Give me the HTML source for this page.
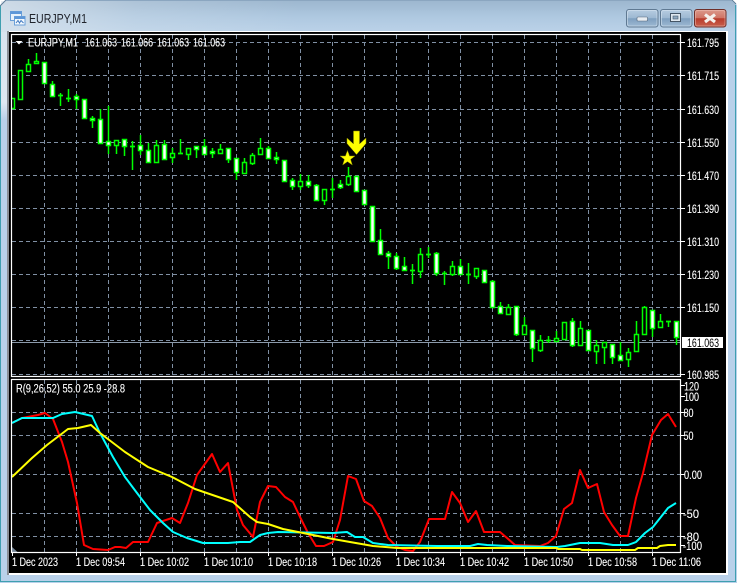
<!DOCTYPE html>
<html><head><meta charset="utf-8"><title>EURJPY,M1</title>
<style>html,body{margin:0;padding:0;width:738px;height:583px;overflow:hidden;background:#fff}svg{display:block}text{font-family:"Liberation Sans",sans-serif}</style>
</head><body>
<svg width="738" height="583" viewBox="0 0 738 583" xmlns="http://www.w3.org/2000/svg">
<defs>
<linearGradient id="tb" x1="0" y1="0" x2="0" y2="1"><stop offset="0" stop-color="#9db7cf"/><stop offset=".5" stop-color="#aec8e0"/><stop offset="1" stop-color="#bbd2e8"/></linearGradient>
<linearGradient id="tl" x1="0" y1="0" x2="1" y2="0"><stop offset="0" stop-color="#dde6ee" stop-opacity=".75"/><stop offset=".45" stop-color="#dde6ee" stop-opacity=".25"/><stop offset="1" stop-color="#dde6ee" stop-opacity="0"/></linearGradient>
<linearGradient id="lf" x1="0" y1="0" x2="0" y2="1"><stop offset="0" stop-color="#d8e4ef"/><stop offset=".8" stop-color="#dfe9f3"/><stop offset="1" stop-color="#b9d1ea"/></linearGradient>
<linearGradient id="bb" x1="0" y1="0" x2="0" y2="1"><stop offset="0" stop-color="#b7cde2"/><stop offset=".48" stop-color="#9db8d2"/><stop offset=".52" stop-color="#7e9fbf"/><stop offset="1" stop-color="#9fbad4"/></linearGradient>
<linearGradient id="bc" x1="0" y1="0" x2="0" y2="1"><stop offset="0" stop-color="#dc9a8c"/><stop offset=".48" stop-color="#cf7465"/><stop offset=".52" stop-color="#b83b2b"/><stop offset="1" stop-color="#c9624f"/></linearGradient>
<clipPath id="cm"><rect x="12" y="35" width="668" height="341"/></clipPath>
<clipPath id="cs"><rect x="12" y="380" width="668" height="172"/></clipPath>
</defs>
<rect width="738" height="583" fill="#fff"/>
<path d="M0 6L6 0H732L737 5V583H0Z" fill="#b9d1ea"/>
<path d="M1 5L5 1H732L736 5V32H1Z" fill="url(#tb)"/>
<rect x="1" y="1" width="300" height="31" fill="url(#tl)"/>
<rect x="1" y="32" width="6" height="88" fill="url(#lf)"/>
<path d="M0 6L6 0H732L736 4" fill="none" stroke="#5d7b96" stroke-width="1"/>
<path d="M.5 6V581.5H735.5V5" fill="none" stroke="#3f9fb0" stroke-width="1"/>
<rect x="7" y="31" width="721" height="544" fill="#fff"/>
<rect x="7" y="31" width="2" height="544" fill="#8a8f96"/>
<rect x="9" y="32" width="717" height="541" fill="#000"/>

<!-- title -->
<g>
<rect x="10.5" y="11.5" width="11" height="9" fill="#e8f2fb" stroke="#6a9fd8"/>
<rect x="10.5" y="11.5" width="11" height="2.5" fill="#5d97d8"/>
<rect x="14.5" y="16.5" width="10.5" height="8.5" fill="#f4f9fd" stroke="#6a9fd8"/>
<rect x="14.5" y="16.5" width="10.5" height="2.5" fill="#5d97d8"/>
<path d="M16 23L18 20.5L19.5 23L21 20.5L23.5 23" fill="none" stroke="#3f78c0" stroke-width="1"/>
</g>
<text x="29" y="23" font-size="13" fill="#20242c" textLength="58" lengthAdjust="spacingAndGlyphs">EURJPY,M1</text>

<!-- buttons -->
<rect x="626.5" y="9.5" width="31.5" height="17.5" rx="2.5" fill="url(#bb)" stroke="#5f7992"/>
<rect x="627.5" y="10.5" width="29.5" height="15.5" rx="2" fill="none" stroke="#dbe8f3" stroke-opacity=".55"/>
<rect x="637" y="17" width="10.5" height="4" rx="1" fill="#e8edf2" stroke="#54677a" stroke-width=".6"/>
<rect x="660.5" y="9.5" width="31.5" height="17.5" rx="2.5" fill="url(#bb)" stroke="#5f7992"/>
<rect x="661.5" y="10.5" width="29.5" height="15.5" rx="2" fill="none" stroke="#dbe8f3" stroke-opacity=".55"/>
<rect x="670.5" y="13.5" width="10" height="8" fill="#dfe8f0" stroke="#445566"/>
<rect x="673" y="16" width="5" height="3" fill="#8fa8c0" stroke="#445566" stroke-width=".6"/>
<rect x="694.5" y="9.5" width="31.5" height="17.5" rx="2.5" fill="url(#bc)" stroke="#6f2f2a"/>
<rect x="695.5" y="10.5" width="29.5" height="15.5" rx="2" fill="none" stroke="#f2c4b8" stroke-opacity=".5"/>
<path d="M705 14.5L715 22M715 14.5L705 22" stroke="#f4f0ec" stroke-width="3.2" fill="none"/>

<!-- main grid -->
<g clip-path="url(#cm)" stroke="#8090a4" stroke-width="1" stroke-dasharray="4 3" fill="none">
<path d="M12 42.5H680M12 75.5H680M12 109.5H680M12 142.5H680M12 175.5H680M12 208.5H680M12 241.5H680M12 274.5H680M12 307.5H680M12 340.5H680M12 374.5H680"/>
<path d="M44.5 35V376M76.5 35V376M108.5 35V376M140.5 35V376M172.5 35V376M204.5 35V376M236.5 35V376M268.5 35V376M300.5 35V376M332.5 35V376M364.5 35V376M396.5 35V376M428.5 35V376M460.5 35V376M492.5 35V376M524.5 35V376M556.5 35V376M588.5 35V376M620.5 35V376M652.5 35V376"/>
</g>
<path d="M12 342.5H680" stroke="#8c9aaa" stroke-width="1"/>

<!-- candles -->
<g clip-path="url(#cm)" stroke="#00ff00" stroke-width="1.5">
<path fill="none" d="M28.5 59V71M36.5 53V62M44.5 62V84M52.5 81V97M60.5 93V106M68.5 89V102M76.5 94V109M92.5 116V128M100.5 109V144M108.5 106V154M116.5 140V154M124.5 139V156M132.5 141V170M140.5 135V155M148.5 143V163M156.5 140V162M164.5 140V159M172.5 148V163M180.5 139V153M188.5 148V160M196.5 146V158M204.5 139V154M212.5 148V158M220.5 144V153M228.5 148V163M236.5 158V180M244.5 158V173M252.5 153V165M260.5 138V155M268.5 146V158M276.5 152V164M292.5 178V190M300.5 174V190M308.5 175V188M316.5 184V200M324.5 189V205M332.5 178V198M340.5 180V189M348.5 167V186M356.5 176V192M364.5 190V205M380.5 229V254M388.5 251V269M396.5 253V270M404.5 257V270M412.5 264V284M420.5 248V278M428.5 247V258M436.5 252V276M444.5 271V285M452.5 261V276M460.5 259V274M468.5 263V284M476.5 268V279M484.5 270V283M492.5 280V307M500.5 302V313M508.5 304V314M516.5 306V336M524.5 317V334M532.5 330V362M540.5 335V352M548.5 336V343M556.5 331V341M572.5 318V347M580.5 321V345M596.5 340V364M604.5 342V364M612.5 344V364M620.5 342V360M628.5 348V367M636.5 321V351M644.5 306V334M652.5 310V337M660.5 314V327M668.5 321V327M676.5 321V345"/>
<path fill="none" stroke-width="1.8" d="M58 95.5h5M66 98.5h5M130 146.5h5M178 153.5h5M330 189.5h5M410 270.5h5M426 254.5h5M442 273.5h5M466 274.5h5M546 340.5h5M666 321.5h5"/>
<path fill="#000" d="M10.5 98.5h4V108.5h-4zM18.5 70.5h4V99.5h-4zM26.5 64.5h4V71.5h-4zM34.5 61.5h4V63.5h-4zM114.5 140.5h4V145.5h-4zM154.5 145.5h4V162.5h-4zM170.5 153.5h4V157.5h-4zM186.5 148.5h4V154.5h-4zM218.5 149.5h4V153.5h-4zM242.5 162.5h4V173.5h-4zM250.5 155.5h4V163.5h-4zM258.5 148.5h4V154.5h-4zM298.5 181.5h4V186.5h-4zM322.5 189.5h4V200.5h-4zM346.5 176.5h4V184.5h-4zM418.5 254.5h4V271.5h-4zM450.5 266.5h4V274.5h-4zM474.5 268.5h4V276.5h-4zM506.5 307.5h4V314.5h-4zM522.5 325.5h4V334.5h-4zM538.5 340.5h4V350.5h-4zM554.5 338.5h4V341.5h-4zM562.5 322.5h4V339.5h-4zM578.5 328.5h4V345.5h-4zM594.5 345.5h4V351.5h-4zM602.5 342.5h4V347.5h-4zM626.5 352.5h4V359.5h-4zM634.5 334.5h4V351.5h-4zM642.5 307.5h4V334.5h-4zM658.5 321.5h4V327.5h-4z"/>
<path fill="#fff" d="M42.5 62.5h4V83.5h-4zM50.5 84.5h4V96.5h-4zM74.5 96.5h4V99.5h-4zM82.5 99.5h4V118.5h-4zM90.5 118.5h4V120.5h-4zM98.5 119.5h4V143.5h-4zM106.5 141.5h4V145.5h-4zM122.5 139.5h4V146.5h-4zM138.5 145.5h4V150.5h-4zM146.5 150.5h4V162.5h-4zM162.5 144.5h4V159.5h-4zM194.5 146.5h4V149.5h-4zM202.5 146.5h4V154.5h-4zM210.5 151.5h4V153.5h-4zM226.5 148.5h4V159.5h-4zM234.5 158.5h4V172.5h-4zM266.5 148.5h4V158.5h-4zM274.5 157.5h4V159.5h-4zM282.5 160.5h4V181.5h-4zM290.5 180.5h4V186.5h-4zM306.5 181.5h4V185.5h-4zM314.5 185.5h4V200.5h-4zM338.5 184.5h4V187.5h-4zM354.5 176.5h4V191.5h-4zM362.5 190.5h4V204.5h-4zM370.5 206.5h4V241.5h-4zM378.5 240.5h4V254.5h-4zM386.5 253.5h4V256.5h-4zM394.5 256.5h4V268.5h-4zM402.5 266.5h4V270.5h-4zM434.5 253.5h4V273.5h-4zM458.5 266.5h4V274.5h-4zM482.5 270.5h4V282.5h-4zM490.5 281.5h4V307.5h-4zM498.5 306.5h4V313.5h-4zM514.5 306.5h4V334.5h-4zM530.5 330.5h4V348.5h-4zM570.5 321.5h4V345.5h-4zM586.5 330.5h4V350.5h-4zM610.5 344.5h4V357.5h-4zM618.5 355.5h4V360.5h-4zM650.5 310.5h4V328.5h-4zM674.5 321.5h4V337.5h-4z"/>
</g>

<!-- arrow + star -->
<path d="M353.5 131H359.5V144L366 138V143.5L356.5 154.5L347 143.5V138L353.5 144Z" fill="#ffff00" stroke="#8a8a00" stroke-width=".5"/>
<path d="M347.5 150.5L349.6 156H355L350.6 159.4L352.3 165L347.5 161.6L342.7 165L344.4 159.4L340 156H345.4Z" fill="#ffff00" stroke="#8a8a00" stroke-width=".5"/>

<!-- frames -->
<rect x="11.5" y="34.5" width="669" height="342" fill="none" stroke="#fff" stroke-width="1.2"/>

<!-- legend -->
<path d="M15.5 41H22.5L19 44.5Z" fill="#fff"/>
<g font-size="11.5" fill="#fff" stroke="#fff" stroke-width=".12">
<text x="28" y="46.5" textLength="50" lengthAdjust="spacingAndGlyphs">EURJPY,M1</text>
<text x="85" y="46.5" textLength="32" lengthAdjust="spacingAndGlyphs">161.063</text>
<text x="121" y="46.5" textLength="32" lengthAdjust="spacingAndGlyphs">161.066</text>
<text x="157" y="46.5" textLength="32" lengthAdjust="spacingAndGlyphs">161.063</text>
<text x="193" y="46.5" textLength="32" lengthAdjust="spacingAndGlyphs">161.063</text>
</g>

<!-- price axis -->
<path d="M681 42.5h4M681 75.5h4M681 109.5h4M681 142.5h4M681 175.5h4M681 208.5h4M681 241.5h4M681 274.5h4M681 307.5h4M681 374.5h4M681 385.5h4M681 396.5h4M681 412.5h4M681 435.5h4M681 474.5h4M681 513.5h4M681 536.5h4M681 545.5h4" stroke="#fff"/>
<g font-size="11.5" fill="#fff" stroke="#fff" stroke-width=".12">
<text x="687" y="47" textLength="32" lengthAdjust="spacingAndGlyphs">161.795</text>
<text x="687" y="80" textLength="32" lengthAdjust="spacingAndGlyphs">161.715</text>
<text x="687" y="114" textLength="32" lengthAdjust="spacingAndGlyphs">161.630</text>
<text x="687" y="147" textLength="32" lengthAdjust="spacingAndGlyphs">161.550</text>
<text x="687" y="180" textLength="32" lengthAdjust="spacingAndGlyphs">161.470</text>
<text x="687" y="213" textLength="32" lengthAdjust="spacingAndGlyphs">161.390</text>
<text x="687" y="246" textLength="32" lengthAdjust="spacingAndGlyphs">161.310</text>
<text x="687" y="279" textLength="32" lengthAdjust="spacingAndGlyphs">161.230</text>
<text x="687" y="312" textLength="32" lengthAdjust="spacingAndGlyphs">161.150</text>
<text x="687" y="379" textLength="32" lengthAdjust="spacingAndGlyphs">160.985</text>
</g>
<rect x="682" y="337" width="41" height="11" fill="#fff"/>
<text x="687" y="347" font-size="11.5" fill="#000" textLength="32" lengthAdjust="spacingAndGlyphs">161.063</text>

<!-- sub window -->
<g clip-path="url(#cs)" stroke="#8090a4" stroke-width="1" stroke-dasharray="4 3" fill="none">
<path d="M12 412.5H680M12 435.5H680M12 474.5H680M12 513.5H680M12 536.5H680"/>
<path d="M44.5 380V552M76.5 380V552M108.5 380V552M140.5 380V552M172.5 380V552M204.5 380V552M236.5 380V552M268.5 380V552M300.5 380V552M332.5 380V552M364.5 380V552M396.5 380V552M428.5 380V552M460.5 380V552M492.5 380V552M524.5 380V552M556.5 380V552M588.5 380V552M620.5 380V552M652.5 380V552"/>
</g>
<path d="M12 547L17.5 552H12Z" fill="#778899"/>
<g clip-path="url(#cs)" fill="none" stroke-width="2" stroke-linejoin="round">
<path stroke="#ff0000" d="M12 423L22 418L38 415L45 413L53 419L62 442L68 462L77 503L84 545L93 549L108 550L115 547L120 547L126 548L133 542L148 542L157 523L172 518L180 523L188 503L197 475L212 454L220 472L228 463L237 510L243 525L253 537L260 502L268 486L276 487L285 497L293 502L300 517L308 533L316 546L324 546L333 542L340 520L348 476L356 479L364 501L372 506L380 518L388 538L397 547L405 550L413 551L420 542L429 519L445 519L452 492L460 503L468 522L476 511L484 532L500 532L507 538L515 545L540 546L548 543L556 536L564 509L572 503L580 470L588 488L597 484L604 512L612 525L620 536L628 536L636 498L643 473L652 435L661 420L668 414L676 427"/>
<path stroke="#00ffff" d="M12 423L22 418L53 418L62 414L75 412L92 416L100 433L113 457L125 477L137 493L150 510L163 523L173 532L187 538L203 543L228 543L240 542L250 542L260 535L268 533L278 532L333 533L347 532L355 537L363 537L373 543L388 545L437 546L470 546L478 544L487 545L507 546L557 547L565 546L580 543L600 543L613 545L628 545L636 542L645 533L653 527L668 508L676 503"/>
<path stroke="#ffff00" d="M12 477L32 458L47 445L68 429L78 428L91 425L100 433L125 452L148 467L172 477L195 489L233 502L250 517L257 522L268 524L283 529L308 534L333 539L350 542L373 546L397 548L557 548L558 549L580 549L582 550L635 550L638 548L657 548L660 546L668 545L676 545"/>
</g>
<rect x="11.5" y="379.5" width="669" height="173" fill="none" stroke="#fff" stroke-width="1.2"/>
<text x="16" y="392.5" font-size="11.5" fill="#fff" stroke="#fff" stroke-width=".12" textLength="109" lengthAdjust="spacingAndGlyphs">R(9,26,52) 55.0 25.9 -28.8</text>

<g font-size="11.5" fill="#fff" stroke="#fff" stroke-width=".12">
<text x="684" y="390.5" textLength="15" lengthAdjust="spacingAndGlyphs">120</text>
<text x="684" y="401" textLength="15" lengthAdjust="spacingAndGlyphs">100</text>
<text x="683.5" y="417" textLength="10" lengthAdjust="spacingAndGlyphs">80</text>
<text x="683.5" y="440" textLength="10" lengthAdjust="spacingAndGlyphs">50</text>
<text x="684" y="479" textLength="18" lengthAdjust="spacingAndGlyphs">0.00</text>
<text x="683" y="518" textLength="16" lengthAdjust="spacingAndGlyphs">-50</text>
<text x="683" y="541" textLength="16" lengthAdjust="spacingAndGlyphs">-80</text>
<text x="683" y="550" textLength="19" lengthAdjust="spacingAndGlyphs">-100</text>
</g>

<!-- time axis -->
<path d="M12.5 553v3M76.5 553v3M140.5 553v3M204.5 553v3M268.5 553v3M332.5 553v3M396.5 553v3M460.5 553v3M524.5 553v3M588.5 553v3M652.5 553v3" stroke="#fff"/>
<g font-size="11.5" fill="#fff" stroke="#fff" stroke-width=".12">
<text x="12" y="566" textLength="46" lengthAdjust="spacingAndGlyphs">1 Dec 2023</text>
<text x="76" y="566" textLength="49" lengthAdjust="spacingAndGlyphs">1 Dec 09:54</text>
<text x="140" y="566" textLength="49" lengthAdjust="spacingAndGlyphs">1 Dec 10:02</text>
<text x="204" y="566" textLength="49" lengthAdjust="spacingAndGlyphs">1 Dec 10:10</text>
<text x="268" y="566" textLength="49" lengthAdjust="spacingAndGlyphs">1 Dec 10:18</text>
<text x="332" y="566" textLength="49" lengthAdjust="spacingAndGlyphs">1 Dec 10:26</text>
<text x="396" y="566" textLength="49" lengthAdjust="spacingAndGlyphs">1 Dec 10:34</text>
<text x="460" y="566" textLength="49" lengthAdjust="spacingAndGlyphs">1 Dec 10:42</text>
<text x="524" y="566" textLength="49" lengthAdjust="spacingAndGlyphs">1 Dec 10:50</text>
<text x="588" y="566" textLength="49" lengthAdjust="spacingAndGlyphs">1 Dec 10:58</text>
<text x="652" y="566" textLength="49" lengthAdjust="spacingAndGlyphs">1 Dec 11:06</text>
</g>
</svg>
</body></html>
